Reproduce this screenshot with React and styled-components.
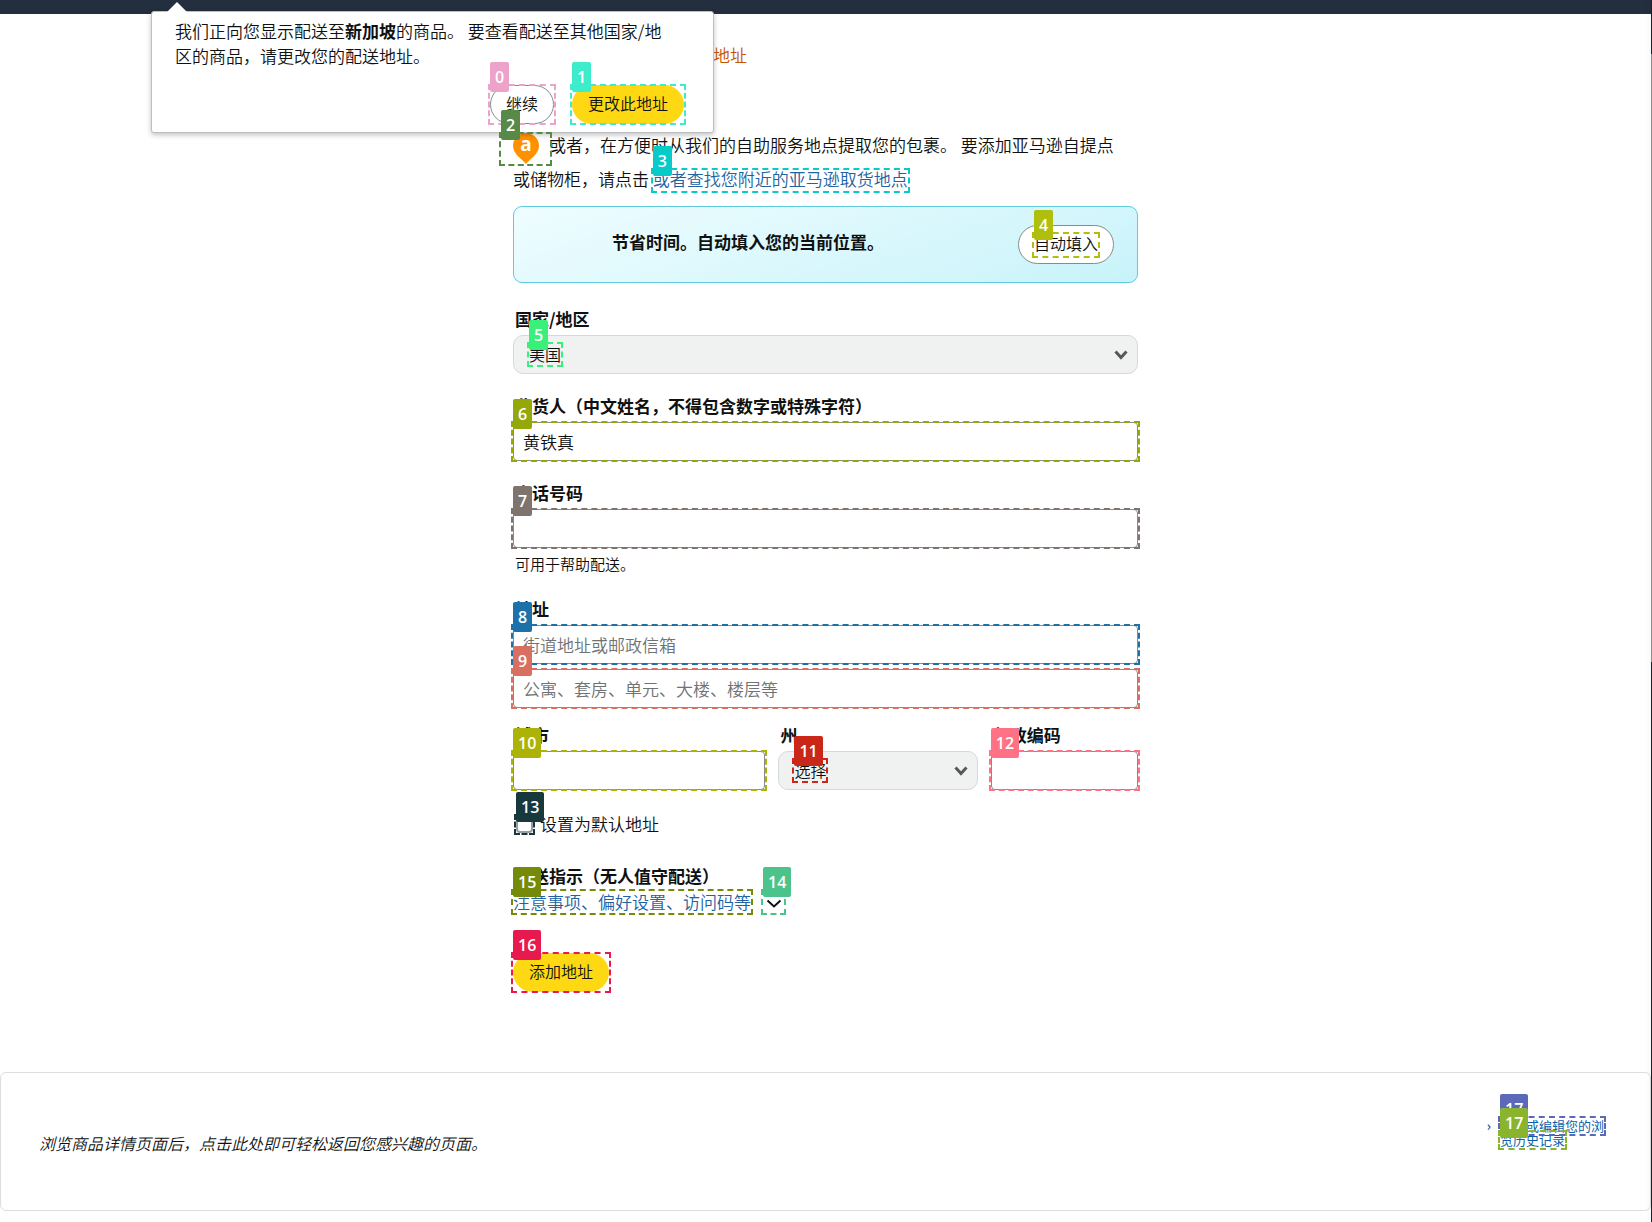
import React from "react";
import styled, { createGlobalStyle } from "styled-components";

const GlobalStyle = createGlobalStyle`
  *, *::before, *::after { box-sizing: border-box; }
  body {
    margin: 0;
    background: #fff;
    color: #0f1111;
    font-family: "Noto Sans CJK SC", "Noto Sans", sans-serif;
    font-size: 17px;
    font-weight: 350;
    line-height: 24px;
  }
  input, select, button { font: inherit; color: inherit; margin: 0; }
  a { color: #2162a1; text-decoration: none; }
`;

const Page = styled.div`
  position: relative;
  min-height: 100vh;
  padding-right: 1px;

  /* thin window edge with its soft shadow */
  &::after {
    content: "";
    position: absolute;
    inset: 0 0 0 auto;
    width: 1px;
    background: linear-gradient(#1c1f23 54px, #8c8c8c 54px 662px, #1c1f23 662px);
    box-shadow: -1px 0 5px rgba(0, 0, 0, 0.15);
  }
`;

const TopBar = styled.header`
  height: 14px;
  background: #232f3e;
`;

const Column = styled.main`
  width: 100%;
  max-width: 625px;
  margin: 0 auto;
  padding-top: 29px;
`;

const Breadcrumb = styled.nav`
  padding-left: 200px;
  color: #c45500;
`;

/* numbered highlight drawn over an interactive element */
const Target = styled.span`
  position: relative;
  display: ${(p) => (p.$block ? "block" : "inline-block")};
`;

const Outline = styled.span`
  position: absolute;
  inset: ${(p) => p.$inset || "-1px -2px"};
  border: 2px dashed ${(p) => p.$color};
  pointer-events: none;
  z-index: 4;
`;

const SelectOutline = styled(Outline)`
  inset: 7px auto auto 14px;
  width: 36px;
  height: 25px;
`;

const Badge = styled.span`
  position: absolute;
  top: -24px;
  left: 0;
  height: 30px;
  padding: 0 5px;
  border-radius: 2px;
  background: ${(p) => p.$color};
  color: #fff;
  font: 600 16px/30px "Open Sans", "Noto Sans", sans-serif;
`;

function Mark({ n, color, inset, as: Shape = Outline }) {
  return (
    <Shape $color={color} $inset={inset}>
      <Badge $color={color}>{n}</Badge>
    </Shape>
  );
}

const Popover = styled.section`
  position: absolute;
  z-index: 3;
  top: 11px;
  left: 151px;
  width: 563px;
  padding: 6px 29px 8px 23px;
  background: #fff;
  border: 1px solid #bbbfbf;
  border-radius: 3px;
  box-shadow: 0 2px 5px rgba(15, 17, 17, 0.25);
  line-height: 25px;

  &::before {
    content: "";
    position: absolute;
    top: -10px;
    left: 15px;
    border: 10px solid transparent;
    border-top: 0;
    border-bottom-color: #fff;
  }
`;

const PopoverText = styled.p`
  margin: 0;
`;

const PopoverActions = styled.div`
  display: flex;
  justify-content: flex-end;
  gap: 18px;
  margin-top: 17px;
`;

const Pill = styled.button`
  display: block;
  height: 39px;
  padding: 0 15px 3px;
  border: 1px solid ${(p) => (p.$primary ? "#ffd814" : "#888c8c")};
  border-radius: 20px;
  background: ${(p) => (p.$primary ? "#ffd814" : "#fff")};
  font-size: 16px;
  line-height: 24px;
  white-space: nowrap;
`;

const Pickup = styled.p`
  margin: 61px 0 10px;
  line-height: 34px;
`;

const PinLink = styled.a`
  display: inline-block;
  width: 36px;
  height: 30px;
  padding-top: 1px;
  vertical-align: middle;

  svg { display: block; }
`;

const AutofillBar = styled.section`
  display: flex;
  align-items: center;
  justify-content: space-between;
  height: 77px;
  margin-bottom: 24px;
  padding: 0 23px 0 98px;
  border: 1px solid #5fcbdf;
  border-radius: 9px;
  background: linear-gradient(160deg, #effdff, #c8f3fa);
`;

const Strong = styled.strong`
  font-weight: 700;
`;

const BarMessage = styled(Strong)`
  padding-bottom: 6px;
`;

const Field = styled.div`
  display: flex;
  flex-direction: column;
  gap: 4px;
  margin-bottom: ${(p) => (p.$tight ? "0" : "20px")};
`;

const Label = styled.label`
  padding-left: 2px;
  font-weight: 700;
`;

const TextInput = styled.input`
  display: block;
  width: 100%;
  height: 39px;
  padding: 0 9px;
  border: 1px solid #888c8c;
  border-radius: 4px;
  background: #fff;

  &::placeholder { color: #6f7373; opacity: 1; }
`;

const Hint = styled.p`
  margin: 0 0 1px;
  padding-left: 2px;
  font-size: 15px;
  line-height: 24px;
`;

const SelectBox = styled.span`
  position: relative;
  display: block;

  svg {
    position: absolute;
    right: 10px;
    top: 15px;
    pointer-events: none;
  }
`;

const Select = styled.select`
  appearance: none;
  display: block;
  width: 100%;
  height: 39px;
  padding: 0 30px 2px 15px;
  border: 1px solid #d5d9d9;
  border-radius: 10px;
  background: #f0f2f2;
  font-size: 16px;
`;

const AddressLines = styled.div`
  display: grid;
  gap: 5px;
  margin-bottom: 15px;
`;

const CityRow = styled.div`
  display: grid;
  grid-template-columns: 252fr 199fr 147fr;
  gap: 13px;
  margin-bottom: 22px;
`;

const CheckRow = styled.div`
  display: flex;
  align-items: center;
  gap: 7px;
  padding-left: 3px;
  margin-bottom: 28px;
`;

const Checkbox = styled.input`
  appearance: none;
  display: block;
  width: 17px;
  height: 17px;
  border: 2px solid #9a9da0;
  border-radius: 4px;
  background: #fff;
`;

const InstructionsTitle = styled.h2`
  margin: 0;
  padding-left: 2px;
  font-size: 17px;
  font-weight: 700;
`;

const InstructionsRow = styled.div`
  display: flex;
  gap: 12px;
  margin: 2px 0 39px;
`;

const IconButton = styled.button`
  display: flex;
  align-items: center;
  justify-content: center;
  width: 21px;
  height: 24px;
  padding: 4px 0 0;
  border: 0;
  background: none;
`;

const HistoryPanel = styled.footer`
  display: flex;
  align-items: center;
  justify-content: space-between;
  height: 139px;
  margin-top: 80px;
  padding: 0 46px 0 38px;
  border: 1px solid #ddd;
  border-radius: 6px;
`;

const HistoryText = styled.p`
  margin: 3px 0 0;
  font-size: 16px;
  font-style: italic;
`;

const HistoryAside = styled.div`
  display: flex;
  gap: 9px;
  margin-bottom: 17px;
  color: #0f5fa8;
  font-size: 13px;
  font-weight: 400;
  line-height: 14px;

  a { color: inherit; }
`;

const Arrow = styled.span`
  font-weight: 700;
`;

const HistoryLine = styled.span`
  position: relative;
  display: block;
  width: fit-content;
`;

function Chevron({ size = 14, color = "#565959", weight = 3 }) {
  return (
    <svg width={size} height={10} viewBox={`0 0 ${size} 10`} fill="none" aria-hidden="true">
      <path d={`M1.5 1.5 L${size / 2} 7.5 L${size - 1.5} 1.5`} stroke={color} strokeWidth={weight} />
    </svg>
  );
}

function PickupPin() {
  return (
    <svg width="26" height="31" viewBox="0 0 26 31" role="img" aria-label="a">
      <path d="M13 31 C10.5 27 0 21.5 0 13 A13 13 0 0 1 26 13 C26 21.5 15.5 27 13 31 Z" fill="#ff9000" />
      <text x="13" y="18" textAnchor="middle" fill="#fff" fontFamily="Open Sans, sans-serif" fontWeight="700" fontSize="19">
        a
      </text>
    </svg>
  );
}

function MarkedInput({ n, color, ...rest }) {
  return (
    <Target $block>
      <TextInput type="text" {...rest} />
      <Mark n={n} color={color} />
    </Target>
  );
}

function MarkedSelect({ id, value, n, color }) {
  return (
    <SelectBox>
      <Select id={id} defaultValue={value}>
        <option>{value}</option>
      </Select>
      <Chevron />
      <Mark n={n} color={color} as={SelectOutline} />
    </SelectBox>
  );
}

export default function App() {
  return (
    <Page>
      <GlobalStyle />
      <TopBar />
      <Popover>
        <PopoverText>
          我们正向您显示配送至<Strong>新加坡</Strong>的商品。 要查看配送至其他国家/地
          <br />
          区的商品，请更改您的配送地址。
        </PopoverText>
        <PopoverActions>
          <Target>
            <Pill type="button">继续</Pill>
            <Mark n={0} color="#eda2c9" />
          </Target>
          <Target>
            <Pill type="button" $primary>更改此地址</Pill>
            <Mark n={1} color="#3decca" />
          </Target>
        </PopoverActions>
      </Popover>

      <Column>
        <Breadcrumb>地址</Breadcrumb>
        <Pickup>
          <Target>
            <PinLink href="#pickup">
              <PickupPin />
            </PinLink>
            <Mark n={2} color="#588a47" inset="4px -3px -4px -14px" />
          </Target>
          或者，在方便时从我们的自助服务地点提取您的包裹。 要添加亚马逊自提点
          <br />
          或储物柜，请点击{" "}
          <Target>
            <a href="#locations">或者查找您附近的亚马逊取货地点</a>
            <Mark n={3} color="#06cbc8" inset="6px -2px 3px" />
          </Target>
        </Pickup>

        <AutofillBar>
          <BarMessage>节省时间。自动填入您的当前位置。</BarMessage>
          <Pill type="button">
            <Target>
              自动填入
              <Mark n={4} color="#b0be0d" inset="1px -2px -3px" />
            </Target>
          </Pill>
        </AutofillBar>

        <form onSubmit={(e) => e.preventDefault()}>
          <Field>
            <Label htmlFor="country">国家/地区</Label>
            <MarkedSelect id="country" value="美国" n={5} color="#38f07a" />
          </Field>
          <Field>
            <Label htmlFor="name">收货人（中文姓名，不得包含数字或特殊字符）</Label>
            <MarkedInput id="name" defaultValue="黄铁真" n={6} color="#94a80a" />
          </Field>
          <Field>
            <Label htmlFor="phone">电话号码</Label>
            <MarkedInput id="phone" n={7} color="#7f746d" />
            <Hint>可用于帮助配送。</Hint>
          </Field>
          <AddressLines>
            <Field $tight>
              <Label htmlFor="street">地址</Label>
              <MarkedInput id="street" placeholder="街道地址或邮政信箱" n={8} color="#1c72a8" />
            </Field>
            <MarkedInput aria-label="地址" placeholder="公寓、套房、单元、大楼、楼层等" n={9} color="#d96f61" />
          </AddressLines>
          <CityRow>
            <Field $tight>
              <Label htmlFor="city">城市</Label>
              <MarkedInput id="city" n={10} color="#aab306" />
            </Field>
            <Field $tight>
              <Label htmlFor="state">州</Label>
              <MarkedSelect id="state" value="选择" n={11} color="#ca2718" />
            </Field>
            <Field $tight>
              <Label htmlFor="zip">邮政编码</Label>
              <MarkedInput id="zip" n={12} color="#ff7286" />
            </Field>
          </CityRow>
          <CheckRow>
            <Target>
              <Checkbox type="checkbox" id="default" />
              <Mark n={13} color="#17393d" inset="-2px" />
            </Target>
            <label htmlFor="default">设置为默认地址</label>
          </CheckRow>

          <InstructionsTitle id="instructions">配送指示（无人值守配送）</InstructionsTitle>
          <InstructionsRow>
            <Target>
              <a href="#instructions">注意事项、偏好设置、访问码等</a>
              <Mark n={15} color="#748a08" />
            </Target>
            <Target>
              <IconButton type="button" aria-labelledby="instructions">
                <Chevron size={16} color="#0f1111" weight={2} />
              </IconButton>
              <Mark n={14} color="#4cc38a" />
            </Target>
          </InstructionsRow>

          <Target>
            <Pill type="submit" $primary>添加地址</Pill>
            <Mark n={16} color="#e8194f" />
          </Target>
        </form>
      </Column>

      <HistoryPanel>
        <HistoryText>浏览商品详情页面后，点击此处即可轻松返回您感兴趣的页面。</HistoryText>
        <HistoryAside>
          <Arrow>›</Arrow>
          <a href="#history">
            <HistoryLine>
              查看或编辑您的浏
              <Mark n={17} color="#5b69b8" inset="-3px -2px" />
            </HistoryLine>
            <HistoryLine>
              览历史记录
              <Mark n={17} color="#8bb42e" inset="-3px -2px" />
            </HistoryLine>
          </a>
        </HistoryAside>
      </HistoryPanel>
    </Page>
  );
}
